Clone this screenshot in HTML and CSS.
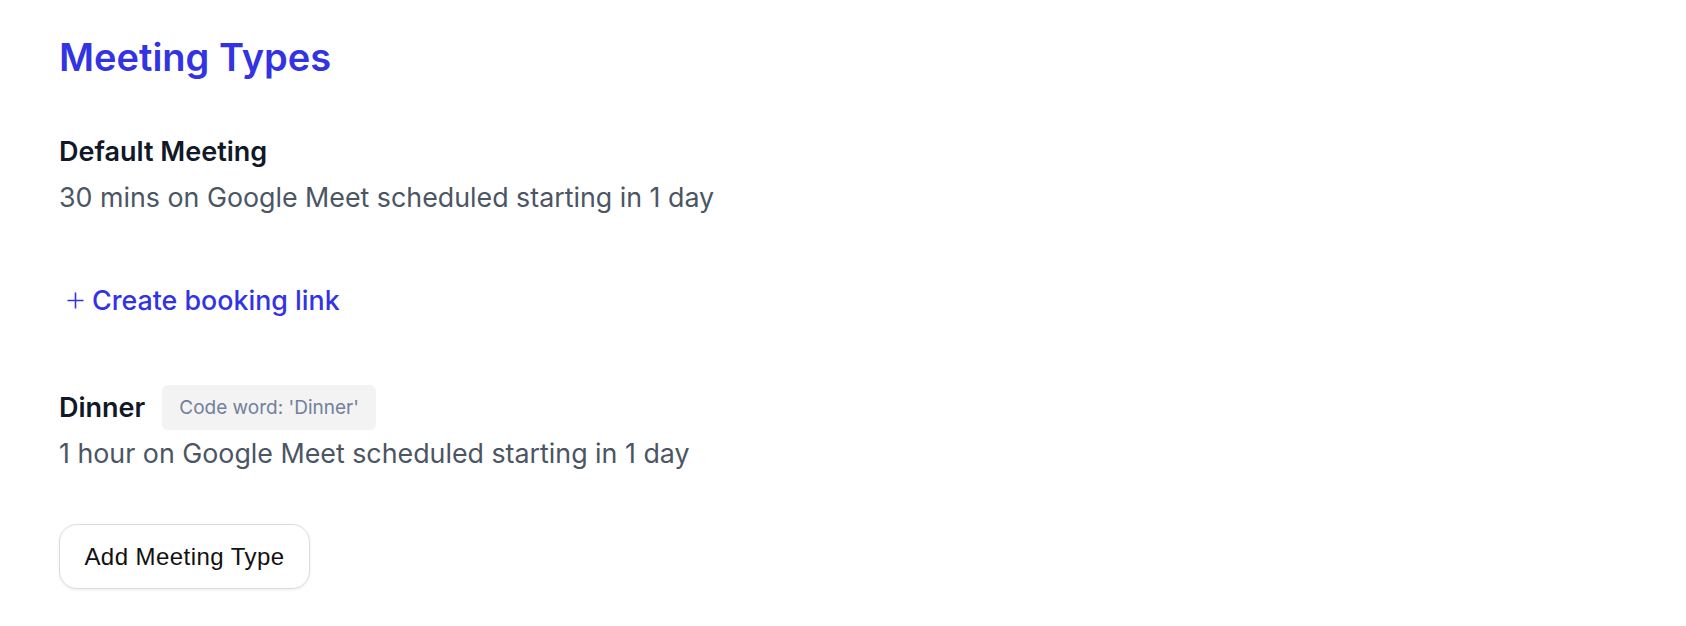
FILE: index.html
```html
<!DOCTYPE html>
<html lang="en">
<head>
    <meta charset="UTF-8">
    <meta name="viewport" content="width=device-width, initial-scale=1.0">
    <title>Meeting Types</title>
    <link rel="stylesheet" href="styles.css">
</head>
<body>
    <div class="page">
        <h1>Meeting Types</h1>

        <div class="meeting first">
            <div class="meeting-head">
                <span class="meeting-name">Default Meeting</span>
            </div>
            <p class="meeting-info">30 mins on Google Meet scheduled starting in 1 day</p>
        </div>

        <a class="create-link" href="#">
            <svg width="19" height="19" viewBox="0 0 19 19" fill="none" stroke="currentColor" stroke-width="1.6">
                <path d="M9.5 1.5v16M1.5 9.5h16"/>
            </svg>
            Create booking link
        </a>

        <div class="meeting">
            <div class="meeting-head">
                <span class="meeting-name">Dinner</span>
                <span class="code-word">Code word: 'Dinner'</span>
            </div>
            <p class="meeting-info">1 hour on Google Meet scheduled starting in 1 day</p>
        </div>

        <button class="add-button">Add Meeting Type</button>
    </div>
</body>
</html>
```

FILE: styles.css
```css
body {
    margin: 0;
    font-family: Inter, "Noto Sans", sans-serif;
    background: #fff;
}
.page {
    padding: 34px 59px;
}
h1 {
    margin: 0;
    font-size: 38px;
    line-height: 46px;
    font-weight: 600;
    color: #3333e4;
}
.meeting {
    margin-top: 69px;
}
.meeting.first {
    margin-top: 56px;
}
.meeting-head {
    display: flex;
    align-items: center;
    gap: 17px;
    min-height: 32px;
}
.meeting-name {
    font-size: 27px;
    line-height: 32px;
    font-weight: 600;
    color: #111827;
}
.meeting-info {
    margin: 12px 0 0;
    font-size: 26.8px;
    line-height: 34px;
    color: #4b5563;
}
.meeting:not(.first) .meeting-info {
    margin-top: 6px;
}
.code-word {
    background: #f3f3f4;
    color: #72809a;
    font-size: 19px;
    line-height: 45px;
    padding: 0 17px;
    border-radius: 6px;
}
.create-link {
    display: flex;
    align-items: center;
    gap: 7px;
    margin-top: 70px;
    padding-left: 7px;
    color: #3333e4;
    font-size: 26.8px;
    line-height: 32px;
    font-weight: 500;
    text-decoration: none;
}
.add-button {
    display: block;
    margin-top: 54px;
    width: 251px;
    height: 65px;
    background: #fff;
    border: 1px solid #dcdcdc;
    border-radius: 18px;
    box-shadow: 0 1px 3px rgba(0, 0, 0, 0.08);
    font-family: "Liberation Sans", Arial, sans-serif;
    font-size: 24px;
    letter-spacing: 0.45px;
    color: #111;
    cursor: pointer;
}
```
